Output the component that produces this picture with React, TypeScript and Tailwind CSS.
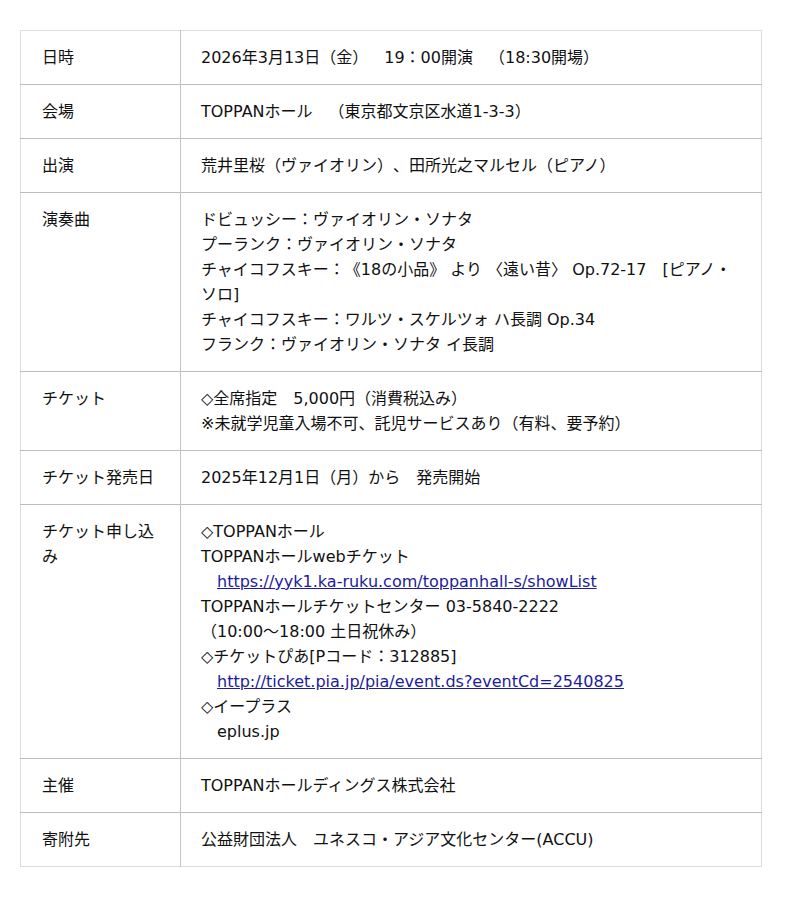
const rows: { label: string; lines: (string | { href: string })[] }[] = [
  { label: "日時", lines: ["2026年3月13日（金）　19：00開演　（18:30開場）"] },
  { label: "会場", lines: ["TOPPANホール　（東京都文京区水道1-3-3）"] },
  { label: "出演", lines: ["荒井里桜（ヴァイオリン）、田所光之マルセル（ピアノ）"] },
  {
    label: "演奏曲",
    lines: [
      "ドビュッシー：ヴァイオリン・ソナタ",
      "プーランク：ヴァイオリン・ソナタ",
      "チャイコフスキー：《18の小品》 より 〈遠い昔〉 Op.72-17　[ピアノ・ソロ]",
      "チャイコフスキー：ワルツ・スケルツォ ハ長調 Op.34",
      "フランク：ヴァイオリン・ソナタ イ長調",
    ],
  },
  {
    label: "チケット",
    lines: ["◇全席指定　5,000円（消費税込み）", "※未就学児童入場不可、託児サービスあり（有料、要予約）"],
  },
  { label: "チケット発売日", lines: ["2025年12月1日（月）から　発売開始"] },
  {
    label: "チケット申し込み",
    lines: [
      "◇TOPPANホール",
      "TOPPANホールwebチケット",
      { href: "https://yyk1.ka-ruku.com/toppanhall-s/showList" },
      "TOPPANホールチケットセンター 03-5840-2222",
      "（10:00〜18:00 土日祝休み）",
      "◇チケットぴあ[Pコード：312885]",
      { href: "http://ticket.pia.jp/pia/event.ds?eventCd=2540825" },
      "◇イープラス",
      "\u3000eplus.jp",
    ],
  },
  { label: "主催", lines: ["TOPPANホールディングス株式会社"] },
  { label: "寄附先", lines: ["公益財団法人　ユネスコ・アジア文化センター(ACCU)"] },
];

export default function App() {
  return (
    <div className="min-h-[897px] bg-white pt-[30px] pl-[20px] font-['DejaVu_Sans','Noto_Sans_CJK_JP',sans-serif] text-[16px] leading-[25px] text-[#111] [text-spacing-trim:space-all]">
      <table className="w-[742px] border-collapse border border-[#dcdcdc]">
        <tbody>
          {rows.map((row, i) => (
            <tr key={i} className={i < rows.length - 1 ? "border-b border-[#bdbdbd]" : ""}>
              <td className="w-[160px] border-r border-[#c4c4c4] px-[21px] py-[14px] align-top">
                {row.label}
              </td>
              <td className="px-[20px] py-[14px] align-top">
                {row.lines.map((line, j) =>
                  typeof line === "string" ? (
                    <div key={j}>{line}</div>
                  ) : (
                    <div key={j}>
                      {"\u3000"}
                      <a href={line.href} className="text-[#1c1c9c] underline">
                        {line.href}
                      </a>
                    </div>
                  )
                )}
              </td>
            </tr>
          ))}
        </tbody>
      </table>
    </div>
  );
}
